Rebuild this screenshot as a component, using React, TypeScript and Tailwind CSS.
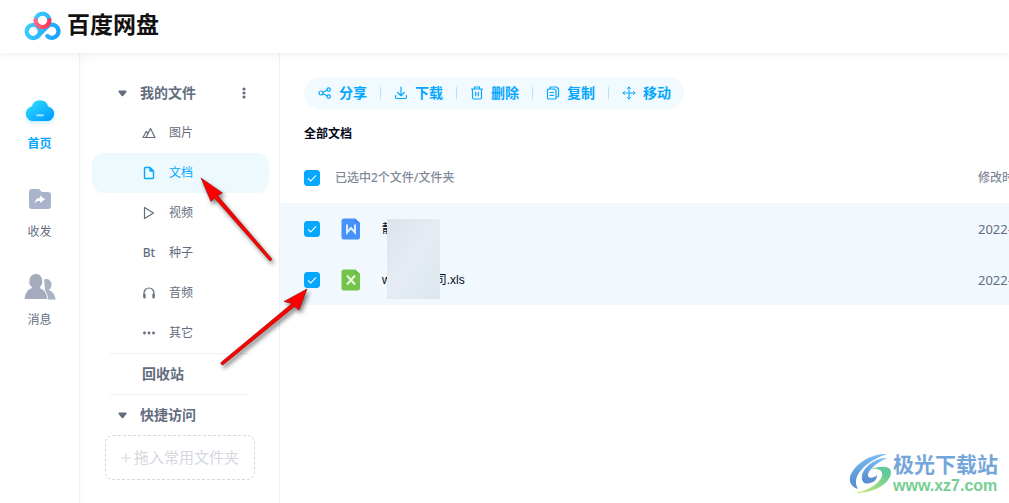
import { useState } from 'react';
import type { ReactNode } from 'react';

type IconProps = { children: ReactNode; className?: string };

const LineIcon = ({ children, className = 'h-[14px] w-[14px]' }: IconProps) => (
  <svg
    viewBox="0 0 14 14"
    className={`shrink-0 ${className}`}
    fill="none"
    stroke="currentColor"
    strokeWidth="1.2"
    strokeLinecap="round"
    strokeLinejoin="round"
    aria-hidden="true"
  >
    {children}
  </svg>
);

// ---------- Logo ----------
const Logo = () => (
  <svg viewBox="70 28 112 94" className="h-[31px] w-[37px]" fill="none" strokeWidth="13" aria-hidden="true">
    <defs>
      <linearGradient id="logoBlue" gradientUnits="userSpaceOnUse" x1="75" y1="60" x2="178" y2="110">
        <stop offset="0" stopColor="#3fd3fb" />
        <stop offset="1" stopColor="#1aa0ff" />
      </linearGradient>
      <linearGradient id="logoRed" x1="0" y1="0" x2="1" y2="0">
        <stop offset="0" stopColor="#ff6a86" />
        <stop offset="1" stopColor="#f8385f" />
      </linearGradient>
    </defs>
    <path d="M105 60a21 21 0 1 1 42 0" stroke="url(#logoBlue)" />
    <circle cx="98" cy="93" r="20" stroke="url(#logoBlue)" />
    <path d="M111 108L138 81A20 20 0 1 1 141 107" stroke="url(#logoBlue)" strokeLinecap="round" />
    <path d="M105 59a21 21 0 0 0 42 0" stroke="url(#logoRed)" strokeLinecap="round" />
  </svg>
);

// ---------- Left rail ----------
const navItems = [
  {
    label: '首页',
    icon: (
      <svg viewBox="0 0 32 32" className="h-8 w-8 overflow-visible drop-shadow-[0_2px_2px_rgba(20,165,255,0.25)]" aria-hidden="true">
        <defs>
          <linearGradient id="cloud" x1="0" y1="0" x2="1" y2="1">
            <stop offset="0.1" stopColor="#2bdcff" />
            <stop offset="1" stopColor="#0095ff" />
          </linearGradient>
        </defs>
        <path d="M9.500 26A6.800 7.300 0 0 1 7.800 11.500A8.500 8.500 0 0 1 24.200 11.500A6.800 7.300 0 0 1 22.500 26Z" fill="url(#cloud)" />
        <path d="M12.500 20.300h7" stroke="#b9e7ff" strokeWidth="1.800" />
      </svg>
    ),
  },
  {
    label: '收发',
    icon: (
      <svg viewBox="0 0 32 32" className="h-8 w-8" aria-hidden="true">
        <path d="M8 6h7l3 3h6a3 3 0 0 1 3 3v11a3 3 0 0 1-3 3H8a3 3 0 0 1-3-3V9a3 3 0 0 1 3-3z" fill="#a9b3cb" />
        <path d="M16 12.500l5 3.800-5 3.800v-2.300c-2.500 0-4 .7-5.300 2.700.2-3.500 2-5.500 5.300-5.700z" fill="#fff" />
      </svg>
    ),
  },
  {
    label: '消息',
    icon: (
      <svg viewBox="0 0 32 32" className="h-8 w-8" aria-hidden="true">
        <path d="M20 8.500a5.200 5.600 0 0 1 4.500 10.500c4 1.300 6.500 4.500 7 9.500H22z" fill="#a9b1c2" />
        <path d="M12 2.500a7.500 8 0 0 1 4 14.300c4.500 1.500 7.200 5.700 7.700 11.700H0c.5-6 3.200-10.200 7.700-11.700A7.800 8 0 0 1 12 2.500z" fill="#a3abbd" stroke="#fff" strokeWidth="1" />
      </svg>
    ),
  },
];

// ---------- File categories ----------
const categories = [
  { label: '图片', icon: <LineIcon><path d="M3.500 11.500H1L4.200 5.500l1.500 1.500M4 11.500L8.500 2.500 13 11.500z" /></LineIcon> },
  { label: '文档', icon: <LineIcon><path d="M3.500 1.500h4.500l3.500 3.500v6.500a1 1 0 0 1-1 1h-7a1 1 0 0 1-1-1V2.500a1 1 0 0 1 1-1zM8 1.500v3.500h3.500" strokeWidth="1.400" /></LineIcon> },
  { label: '视频', icon: <LineIcon><path d="M2.500 1.500v11L11.500 7z" /></LineIcon> },
  { label: '种子', icon: <span className="w-[14px] font-['Noto_Sans',sans-serif] font-medium">Bt</span> },
  { label: '音频', icon: <LineIcon><path d="M2 11V7a5 5 0 0 1 10 0v4" /><path d="M2.500 8.500v3M11.500 8.500v3" strokeWidth="2.200" /></LineIcon> },
  {
    label: '其它',
    icon: (
      <LineIcon>
        <g fill="currentColor" stroke="none">
          <circle cx="2.500" cy="7" r="1.400" />
          <circle cx="7" cy="7" r="1.400" />
          <circle cx="11.500" cy="7" r="1.400" />
        </g>
      </LineIcon>
    ),
  },
];

// ---------- Toolbar ----------
const actions = [
  {
    label: '分享',
    icon: (
      <LineIcon>
        <circle cx="3" cy="7" r="2" />
        <circle cx="10.700" cy="3.500" r="1.700" />
        <circle cx="10.700" cy="10.500" r="1.700" />
        <path d="M5 6.200l4-2M5 7.800l4 2" />
      </LineIcon>
    ),
  },
  { label: '下载', icon: <LineIcon><path d="M7 1v8.500M3.700 6.500L7 9.700l3.300-3.200M1.500 9.500v1.500a1.500 1.500 0 0 0 1.500 1.500h8a1.500 1.500 0 0 0 1.500-1.500V9.500" /></LineIcon> },
  { label: '删除', icon: <LineIcon><path d="M1.500 3h11M4.500 3V1h5v2M2.500 3v8.500a1.500 1.500 0 0 0 1.500 1.500h6a1.500 1.500 0 0 0 1.500-1.500V3M5.700 6.200v3.600M8.300 6.200v3.600" /></LineIcon> },
  { label: '复制', icon: <LineIcon><path d="M4 3V2a1 1 0 0 1 1-1h5.500l2 2v7a1 1 0 0 1-1 1h-1M2.500 3h6l1.500 1.500v7.500a1 1 0 0 1-1 1H2.500a1 1 0 0 1-1-1V4a1 1 0 0 1 1-1zM4 6.500h3.500M4 9.300h3.500" /></LineIcon> },
  { label: '移动', icon: <LineIcon><path d="M7 1v12M1 7h12M5.500 2.500L7 1l1.500 1.500M5.500 11.500L7 13l1.500-1.500M2.500 5.500L1 7l1.500 1.500M11.500 5.500L13 7l-1.500 1.500" strokeWidth="1" /></LineIcon> },
];

const Triangle = () => (
  <svg viewBox="0 0 9 7" className="h-[7px] w-[9px]" fill="currentColor" aria-hidden="true">
    <path d="M1.500 .5h6a1 1 0 0 1 .8 1.700L5.200 6a1 1 0 0 1-1.400 0L.7 2.200A1 1 0 0 1 1.500 .5z" />
  </svg>
);

type CheckProps = { label: string; checked: boolean; onChange: () => void };

const Check = ({ label, checked, onChange }: CheckProps) => (
  <label className="grid h-4 w-4">
    <input
      type="checkbox"
      aria-label={label}
      checked={checked}
      onChange={onChange}
      className="h-4 w-4 appearance-none rounded-[3px] border border-[#06a7ff] bg-white checked:bg-[#06a7ff] [grid-area:1/1]"
    />
    <svg viewBox="0 0 16 16" className="pointer-events-none h-4 w-4 [grid-area:1/1]" fill="none" stroke="#fff" strokeWidth="1.100" aria-hidden="true">
      <path d="M4 8.300l2.700 2.700L12 5.300" />
    </svg>
  </label>
);

const FileIcon = ({ kind }: { kind: 'doc' | 'xls' }) => (
  <svg viewBox="0 0 20 22" className="h-[22px] w-5 shrink-0" fill="none" aria-hidden="true">
    <path
      d="M3 .5h11L19 5v14a2.500 2.500 0 0 1-2.500 2.500H3A2.500 2.500 0 0 1 .5 19V3A2.500 2.500 0 0 1 3 .5z"
      fill={kind === 'doc' ? '#4791fa' : '#74c34b'}
    />
    <path d="M14 .5L19 5h-3.500A1.500 1.500 0 0 1 14 3.500z" fill={kind === 'doc' ? '#3a83f0' : '#66b741'} />
    {kind === 'doc' ? (
      <path d="M6 6.500v8l4-4.500 4 4.500v-8" stroke="#e4f0ff" strokeWidth="1.900" />
    ) : (
      <path d="M6 6.500l8 9M14 6.500l-8 9" stroke="#e8f8df" strokeWidth="2" />
    )}
  </svg>
);

const Arrows = () => (
  <svg
    viewBox="0 0 120 200"
    className="pointer-events-none absolute top-[172px] left-[196px] h-[200px] w-[120px] overflow-visible drop-shadow-[2px_3px_2px_rgba(0,0,0,0.5)]"
    fill="#fe0000"
    stroke="#8a1010"
    strokeWidth="0.600"
    aria-hidden="true"
  >
    <path d="M5 6L26.500 21L21.500 23.500L75.500 86.500A1.500 1.500 0 0 1 73.500 88.500L18.500 26L15 29.500Z" />
    <path d="M111 117L103 138L98.500 134.500L27.500 192.500A1.500 1.500 0 0 1 25.500 190L96 131.500L88 129.500Z" />
  </svg>
);

const Watermark = () => (
  <div className="pointer-events-none absolute right-[11px] bottom-[7px] flex items-center">
    <svg viewBox="0 0 44 44" className="h-[44px] w-[44px]" aria-hidden="true">
      <defs>
        <linearGradient id="swirl" x1="0" y1="0" x2="0" y2="1">
          <stop offset="0" stopColor="#7bbcf0" />
          <stop offset="0.800" stopColor="#5b91d2" />
        </linearGradient>
        <linearGradient id="leaf" x1="1" y1="0" x2="0" y2="1">
          <stop offset="0.200" stopColor="#62c99a" />
          <stop offset="1" stopColor="#d5ee76" />
        </linearGradient>
      </defs>
      <path d="M38 2C24 1 5 11 1 25c-1 6 2 10 8 12-4-7-2-14 5-21C20 10 29 5 38 2z" fill="url(#swirl)" />
      <path d="M38 6c-9-1-24 8-25 18-1 6 3 9 8 7 5-1 7-4 7-8-3 3-8 4-9 1-1-5 8-13 19-18z" fill="url(#swirl)" />
      <path d="M22 17c8-3 20-4 20 3 0 10-15 22-38 21 12-1 26-8 29-17 1-6-4-8-11-7z" fill="url(#leaf)" />
    </svg>
    <div>
      <div className="text-[21px] leading-[24px] font-bold text-[#74a6da]">极光下载站</div>
      <div className="text-[16px] leading-[18px] font-bold text-[#75ce92]">www.xz7.com</div>
    </div>
  </div>
);

const App: React.FC = () => {
  const [activeNav, setActiveNav] = useState('首页');
  const [activeCategory, setActiveCategory] = useState('文档');
  const [selected, setSelected] = useState([true, true]);

  const allSelected = selected.every(Boolean);
  const toggle = (index: number) =>
    setSelected((prev) => prev.map((value, i) => (i === index ? !value : value)));

  return (
    <div className="relative flex min-h-screen flex-col overflow-hidden bg-white font-['Liberation_Sans','Noto_Sans_CJK_SC',sans-serif] text-[12px] leading-4 text-[#636d7e]">
      <header className="relative flex h-[53px] items-center gap-[6px] bg-white pb-[3px] pl-6 shadow-[0_0_10px_rgba(0,0,0,0.09)]">
        <Logo />
        <h1 className="text-[23px] leading-8 font-bold text-[#111]">百度网盘</h1>
      </header>

      <div className="flex flex-1">
        {/* Rail */}
        <nav className="flex w-20 shrink-0 flex-col items-center gap-[31px] border-r border-[#eff0f2] pt-[42px]">
          {navItems.map((item) => (
            <button
              key={item.label}
              onClick={() => setActiveNav(item.label)}
              className={`flex flex-col items-center gap-[9px] ${activeNav === item.label ? 'font-bold text-[#06a7ff]' : ''}`}
            >
              {item.icon}
              {item.label}
            </button>
          ))}
        </nav>

        {/* Categories */}
        <aside className="w-[200px] shrink-0 border-r border-[#eff0f2] bg-gradient-to-r from-[#fcfcfc] to-white to-5% pt-5 pr-[10px] pl-3">
          <div className="flex h-10 items-center pr-5 pl-[26px] text-[14px] font-bold">
            <button className="flex items-center gap-[13px]">
              <Triangle />
              我的文件
            </button>
            <button aria-label="更多" className="ml-auto">
              <svg viewBox="0 0 10 12" className="h-3 w-[10px]" fill="currentColor" aria-hidden="true">
                <circle cx="5" cy="2" r="1.600" />
                <circle cx="5" cy="6" r="1.600" />
                <circle cx="5" cy="10" r="1.600" />
              </svg>
            </button>
          </div>
          {categories.map((item) => (
            <button
              key={item.label}
              onClick={() => setActiveCategory(item.label)}
              className={`flex h-10 w-full items-center gap-[13px] rounded-xl pl-[50px] ${
                activeCategory === item.label ? 'bg-[#eef9fe] text-[#06a7ff]' : ''
              }`}
            >
              {item.icon}
              {item.label}
            </button>
          ))}
          <div className="mr-[21px] ml-[18px] flex h-[42px] items-center border-y border-[#eff0f2] pl-8 text-[14px] font-bold">
            <button>回收站</button>
          </div>
          <button className="flex h-10 items-center gap-[13px] pl-[26px] text-[14px] font-bold">
            <Triangle />
            快捷访问
          </button>
          <button className="ml-[13px] flex h-[45px] w-[150px] items-center justify-center gap-[3px] rounded-lg border border-dashed border-[#d4d7de] text-[15px] text-[#d4d7de]">
            <LineIcon className="h-[10px] w-[10px]"><path d="M7 1v12M1 7h12" strokeWidth="1.500" /></LineIcon>
            拖入常用文件夹
          </button>
        </aside>

        {/* Files */}
        <main className="min-w-0 flex-1 overflow-hidden pt-6">
          <div className="ml-6 flex h-8 w-fit items-center rounded-full bg-[#f0faff] pl-px text-[14px] font-bold text-[#06a7ff]">
            {actions.map((action, i) => (
              <div key={action.label} className="flex items-center">
                {i > 0 && <span className="h-3 w-px bg-[#b4e5ff]" />}
                <button className="flex items-center gap-[7px] px-[13px]">
                  {action.icon}
                  {action.label}
                </button>
              </div>
            ))}
          </div>

          <h2 className="mt-[17px] ml-6 font-bold text-[#03081a]">全部文档</h2>

          <table className="mt-[10px] w-full min-w-[860px] table-fixed border-collapse text-left">
            <thead>
              <tr className="h-[51px] text-[#818999]">
                <th className="w-[55px] pl-6">
                  <Check
                    label="全选"
                    checked={allSelected}
                    onChange={() => setSelected(selected.map(() => !allSelected))}
                  />
                </th>
                <th className="w-[643px] font-['Noto_Sans','Noto_Sans_CJK_SC',sans-serif] font-medium">已选中2个文件/文件夹</th>
                <th className="font-medium">修改时间</th>
              </tr>
            </thead>
            <tbody className="text-[#03081a]">
              <tr className="h-[51px] bg-[#f1f9ff]">
                <td className="pl-6">
                  <Check label="文档" checked={selected[0]} onChange={() => toggle(0)} />
                </td>
                <td>
                  <div className="relative flex items-center gap-[21px] pl-[6px]">
                    <FileIcon kind="doc" />
                    <span>静</span>
                    {/* privacy patch over both file names */}
                    <span className="absolute top-px left-[52px] z-10 h-20 w-[53px] bg-gradient-to-br from-[#dce3ea] via-[#e5ecf3] to-[#dde7ef]" />
                  </div>
                </td>
                <td className="text-[13px] text-[#636d7e] font-['Noto_Sans',sans-serif]">2022-</td>
              </tr>
              <tr className="h-[51px] bg-[#f1f9ff]">
                <td className="pl-6">
                  <Check label="表格" checked={selected[1]} onChange={() => toggle(1)} />
                </td>
                <td>
                  <div className="flex items-center gap-[21px] pl-[6px]">
                    <FileIcon kind="xls" />
                    <span className="flex gap-[44px]">
                      <span>w</span>
                      <span>司.xls</span>
                    </span>
                  </div>
                </td>
                <td className="text-[13px] text-[#636d7e] font-['Noto_Sans',sans-serif]">2022-</td>
              </tr>
            </tbody>
          </table>
        </main>
      </div>

      <Arrows />
      <Watermark />
    </div>
  );
};

export default App;
